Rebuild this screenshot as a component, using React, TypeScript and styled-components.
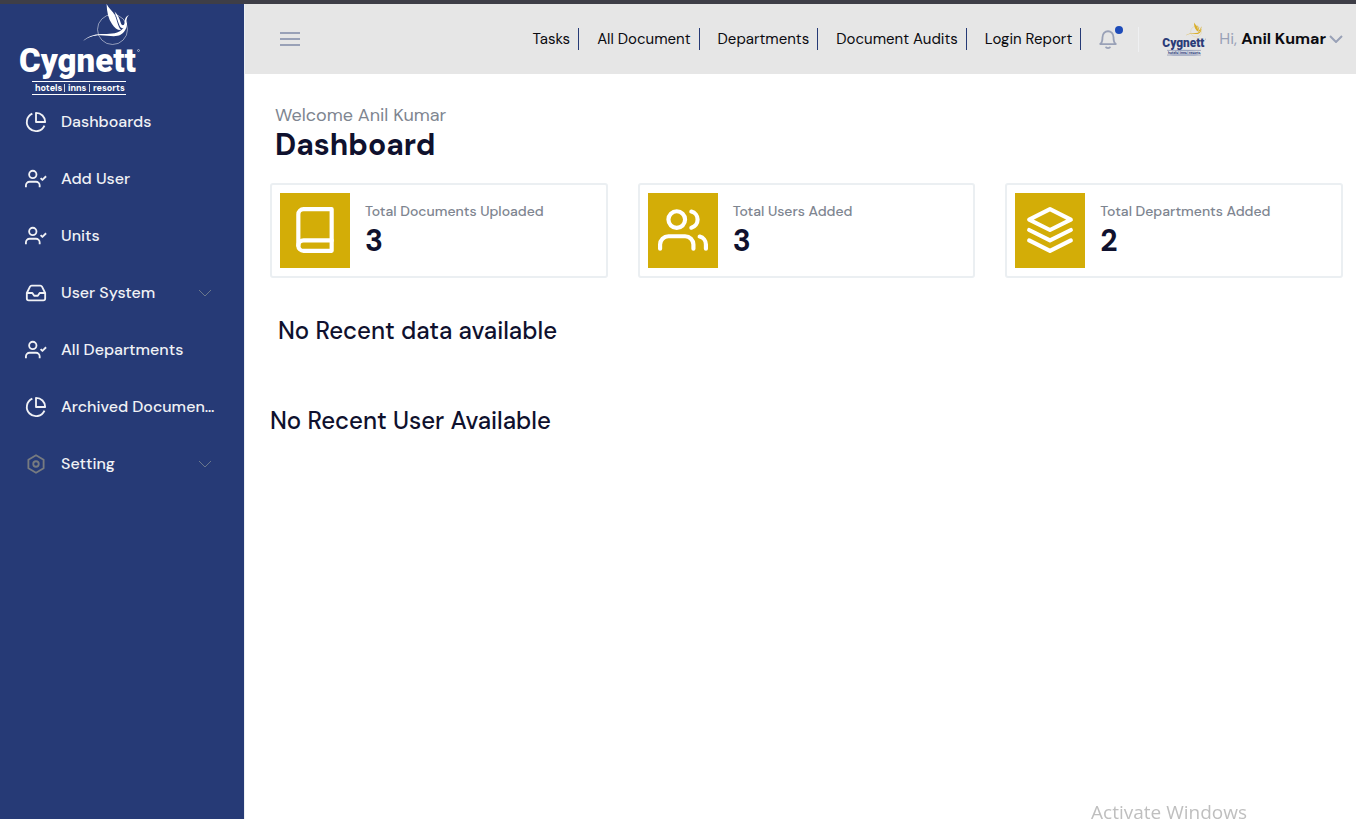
import React from "react";
import styled, { createGlobalStyle } from "styled-components";

const GlobalStyle = createGlobalStyle`
  *, *::before, *::after { box-sizing: border-box; }
  body {
    margin: 0;
    background: #fff;
    color: #0f112e;
    font-family: "DM Sans", Inter, "Open Sans", sans-serif;
    font-size: 15px;
  }
  h1, h2, p, ul, dl, dd { margin: 0; padding: 0; }
  a { color: inherit; text-decoration: none; }
  button { font: inherit; color: inherit; background: none; border: 0; padding: 0; cursor: pointer; }
`;

const Page = styled.div`
  display: flex;
  flex-direction: column;
  min-height: 100vh;
  border-top: 4px solid #3e3e47;
`;

const Columns = styled.div`
  display: flex;
  flex: 1;
`;

const Sidebar = styled.aside`
  flex: 0 0 245px;
  min-width: 0;
  background: #263a76;
  border-right: 1px solid #ebeff2;
`;

const LogoLink = styled.a`
  display: block;
  padding-left: 18px;
  height: 89px;
  svg { display: block; }
`;

const Menu = styled.ul`
  list-style: none;
`;

const menuRow = `
  display: flex;
  align-items: center;
  width: 100%;
  height: 57px;
  padding: 0 32px 0 25px;
  gap: 14px;
  color: #f0f1f5;
  font-size: 16px;
  font-weight: 500;
  text-align: left;
  svg { flex: none; }
`;

const MenuLink = styled.a`
  ${menuRow}
  padding-right: 27px;
`;
const MenuButton = styled.button`&& {${menuRow}}`;

const MenuLabel = styled.span`
  flex: 1;
  min-width: 0;
  overflow: hidden;
  white-space: nowrap;
  text-overflow: ellipsis;
`;

const Content = styled.div`
  flex: 1;
  min-width: 0;
`;

const Header = styled.header`
  display: flex;
  align-items: center;
  height: 70px;
  padding: 0 13px 0 35px;
  background: #e6e6e6;
`;

const IconButton = styled.button`
  display: flex;
  position: relative;
`;

const TopNav = styled.nav`
  display: flex;
  gap: 18px;
  margin-left: auto;
`;

const TopLink = styled.a`
  height: 22px;
  padding-right: 8px;
  border-right: 1px solid #263a76;
  color: #0b0b10;
  font-size: 15px;
  line-height: 22px;
  white-space: nowrap;
`;

const Tools = styled.div`
  display: flex;
  align-items: center;
  margin-left: 16px;
`;

const Dot = styled.span`
  position: absolute;
  top: -2px;
  right: -4px;
  width: 8px;
  height: 8px;
  border-radius: 50%;
  background: #1d4bb9;
`;

const Divider = styled.span`
  width: 1px;
  height: 25px;
  margin: 0 23px 0 19px;
  background: #eff0f2;
`;

const Profile = styled.button`
  display: flex;
  align-items: center;
  white-space: nowrap;
`;

const Greeting = styled.span`
  margin: 0 3px 0 13px;
  color: #99a1b7;
  font-size: 16px;
  line-height: 22px;
  strong { color: #0b0b10; font-weight: 700; }
`;

const Main = styled.main`
  padding: 29px 13px 40px 25px;
`;

const Intro = styled.div`
  padding-left: 5px;
`;

const Welcome = styled.p`
  color: #7e8590;
  font-size: 18px;
  line-height: 24px;
`;

const Title = styled.h1`
  font-size: 30px;
  font-weight: 700;
  line-height: 36px;
`;

const Cards = styled.div`
  display: grid;
  grid-template-columns: repeat(3, 1fr);
  gap: 30px;
  margin-top: 20px;
`;

const Card = styled.section`
  display: flex;
  gap: 15px;
  padding: 8px;
  border: 2px solid #ebeff2;
  border-radius: 3px;
`;

const Tile = styled.div`
  display: flex;
  justify-content: center;
  flex: none;
  width: 70px;
  height: 75px;
  padding-top: 12px;
  background: #d3ad07;
  color: #fff;
`;

const CardLabel = styled.h2`
  padding-top: 8px;
  color: #7e8590;
  font-size: 14px;
  font-weight: 500;
  line-height: 20px;
`;

const CardValue = styled.p`
  font-size: 30px;
  font-weight: 700;
  line-height: 40px;
`;

const EmptyNote = styled.h2<{ $inset?: boolean }>`
  margin-top: 60px;
  padding-left: ${(p) => (p.$inset ? 8 : 0)}px;
  font-size: 24px;
  font-weight: 500;
  line-height: 30px;
  &:first-of-type { margin-top: 38px; }
`;

const Watermark = styled.div`
  position: fixed;
  right: 109px;
  bottom: -7px;
  color: #bfbfbf;
  font-family: "Open Sans", "Noto Sans", sans-serif;
  font-size: 19px;
  line-height: 28px;
  pointer-events: none;
`;

type IconProps = { size?: number; children: React.ReactNode; color?: string; round?: boolean; width?: number };

function Icon({ size = 22, children, color = "currentColor", round = false, width = 2 }: IconProps) {
  return (
    <svg
      width={size}
      height={size}
      viewBox="0 0 24 24"
      fill="none"
      stroke={color}
      strokeWidth={width}
      strokeLinecap={round ? "round" : "butt"}
      strokeLinejoin="round"
      aria-hidden="true"
    >
      {children}
    </svg>
  );
}

const pie = (
  <Icon>
    <path d="M21.21 15.89A10 10 0 1 1 8 2.83" />
    <path d="M22 12A10 10 0 0 0 12 2v10z" />
  </Icon>
);

const userCheck = (
  <Icon>
    <path d="M16 21v-2a4 4 0 0 0-4-4H5a4 4 0 0 0-4 4v2" />
    <circle cx="8.5" cy="7" r="4" />
    <path d="M17 11l2 2 4-4" />
  </Icon>
);

const inbox = (
  <Icon>
    <path d="M22 12h-6l-2 3h-4l-2-3H2" />
    <path d="M5.45 5.11L2 12v6a2 2 0 0 0 2 2h16a2 2 0 0 0 2-2v-6l-3.45-6.89A2 2 0 0 0 16.76 4H7.24a2 2 0 0 0-1.79 1.11z" />
  </Icon>
);

const hexagon = (
  <Icon color="#777b80">
    <path d="M12 2.5l8.3 4.8v9.4L12 21.5l-8.3-4.8V7.3z" />
    <circle cx="12" cy="12" r="3" />
  </Icon>
);

const book = (
  <Icon size={50} round>
    <path d="M4 19.5A2.5 2.5 0 0 1 6.5 17H20" />
    <path d="M6.5 2H20v20H6.5A2.5 2.5 0 0 1 4 19.5v-15A2.5 2.5 0 0 1 6.5 2z" />
  </Icon>
);

const users = (
  <Icon size={50} round>
    <path d="M17 21v-2a4 4 0 0 0-4-4H5a4 4 0 0 0-4 4v2" />
    <circle cx="9" cy="7" r="4" />
    <path d="M23 21v-2a4 4 0 0 0-3-3.87" />
    <path d="M16 3.13a4 4 0 0 1 0 7.75" />
  </Icon>
);

const layers = (
  <Icon size={50} round>
    <path d="M12 2L2 7l10 5 10-5-10-5z" />
    <path d="M2 17l10 5 10-5" />
    <path d="M2 12l10 5 10-5" />
  </Icon>
);

function Chevron({ color, width = 1 }: { color: string; width?: number }) {
  return (
    <svg width="14" height="8" viewBox="0 0 14 8" fill="none" stroke={color} strokeWidth={width} aria-hidden="true">
      <path d="M1 1l6 6 6-6" />
    </svg>
  );
}

type LogoProps = { width: number; height: number; word: string; bird: string; plate?: string };

function Logo({ width, height, word, bird, plate }: LogoProps) {
  return (
    <svg width={width} height={height} viewBox="2 0 122 92" role="img" aria-label="Cygnett hotels, inns, resorts">
      <circle cx="96.5" cy="25.5" r="15" fill="none" stroke={bird} strokeWidth="0.7" opacity="0.7" />
      <path
        fill={bird}
        d="M90.6 0C90.8 8 92.5 15 96 20C98.500 24 102 26.500 105 26C101.500 22 101.500 17 99 11.500C97 7 92.500 4.500 90.600 0Z"
      />
      <path
        fill={bird}
        d="M98.500 7.500C100.500 12 101.500 17 103.500 21.500C105 25 108 25 109.500 22C111 18.500 109.500 14 113 11C109 12.500 108.800 16 108.500 19C108.200 22 105.800 22 104.800 19C103.500 14.500 102 10.500 98.500 7.500Z"
      />
      <path
        fill={bird}
        d="M67 37.300C71 32.500 78 30.300 85 30C93 29.700 100 30.500 105.500 26C108.500 23.500 110 20.500 111 16.500C111.500 22 110 27.500 104.500 30.800C99.500 33.500 92 31.300 84 31.300C78 31.400 72 33 67 37.300Z"
      />
      <text x="3" y="68" fill={word} fontFamily="Roboto, sans-serif" fontWeight="900" fontSize="33">
        Cygnett
      </text>
      <circle cx="122.5" cy="46.5" r="1" fill="none" stroke={word} strokeWidth="0.5" />
      {plate && <ellipse cx="63" cy="86" rx="40" ry="10" fill={plate} />}
      <path d="M16 77.5h94M16 90.5h94" stroke={word} strokeWidth="1" />
      <path d="M48.5 80v8M73.5 80v8" stroke={word} strokeWidth="0.8" />
      <g fill={word} fontFamily="DM Sans, sans-serif" fontWeight="700" fontSize="9">
        <text x="19" y="87">hotels</text>
        <text x="52" y="87">inns</text>
        <text x="77" y="87">resorts</text>
      </g>
    </svg>
  );
}

const menuItems = [
  { label: "Dashboards", icon: pie },
  { label: "Add User", icon: userCheck },
  { label: "Units", icon: userCheck },
  { label: "User System", icon: inbox, opens: true },
  { label: "All Departments", icon: userCheck },
  { label: "Archived Documents", icon: pie },
  { label: "Setting", icon: hexagon, opens: true },
];

const topLinks = ["Tasks", "All Document", "Departments", "Document Audits", "Login Report"];

const stats = [
  { label: "Total Documents Uploaded", value: 3, icon: book },
  { label: "Total Users Added", value: 3, icon: users },
  { label: "Total Departments Added", value: 2, icon: layers },
];

export default function App() {
  return (
    <>
      <GlobalStyle />
      <Page>
        <Columns>
          <Sidebar>
            <LogoLink href="#home">
              <Logo width={122} height={92} word="#fff" bird="#fff" />
            </LogoLink>
            <Menu>
              {menuItems.map((item) => (
                <li key={item.label}>
                  {item.opens ? (
                    <MenuButton type="button" aria-expanded={false}>
                      {item.icon}
                      <MenuLabel>{item.label}</MenuLabel>
                      <Chevron color="#69778c" />
                    </MenuButton>
                  ) : (
                    <MenuLink href="#menu">
                      {item.icon}
                      <MenuLabel>{item.label}</MenuLabel>
                    </MenuLink>
                  )}
                </li>
              ))}
            </Menu>
          </Sidebar>
          <Content>
            <Header>
              <IconButton type="button" aria-label="Toggle menu">
                <svg width="20" height="14" viewBox="0 0 20 14" stroke="#99a1b7" strokeWidth="2" aria-hidden="true">
                  <path d="M0 1h20M0 7h20M0 13h20" />
                </svg>
              </IconButton>
              <TopNav>
                {topLinks.map((label) => (
                  <TopLink key={label} href="#section">{label}</TopLink>
                ))}
              </TopNav>
              <Tools>
                <IconButton type="button" aria-label="Notifications">
                  <Icon size={22} color="#99a1b7" width={2}>
                    <path d="M3.500 17.500h17c-2-1.500-2.500-3-2.500-7.500a6 6.500 0 0 0-12 0c0 4.500-.5 6-2.500 7.500z" />
                    <path d="M9.500 20.500a2.600 2 0 0 0 5 0" />
                  </Icon>
                  <Dot />
                </IconButton>
                <Divider />
                <Profile type="button">
                  <Logo width={44} height={34} word="#2b3c78" bird="#d9ae2b" plate="#ccd1dd" />
                  <Greeting>
                    Hi, <strong>Anil Kumar</strong>
                  </Greeting>
                  <Chevron color="#99a1b7" width={2} />
                </Profile>
              </Tools>
            </Header>
            <Main>
              <Intro>
                <Welcome>Welcome Anil Kumar</Welcome>
                <Title>Dashboard</Title>
              </Intro>
              <Cards>
                {stats.map((stat) => (
                  <Card key={stat.label}>
                    <Tile>{stat.icon}</Tile>
                    <div>
                      <CardLabel>{stat.label}</CardLabel>
                      <CardValue>{stat.value}</CardValue>
                    </div>
                  </Card>
                ))}
              </Cards>
              <EmptyNote $inset>No Recent data available</EmptyNote>
              <EmptyNote>No Recent User Available</EmptyNote>
            </Main>
          </Content>
        </Columns>
      </Page>
      <Watermark>Activate Windows</Watermark>
    </>
  );
}
